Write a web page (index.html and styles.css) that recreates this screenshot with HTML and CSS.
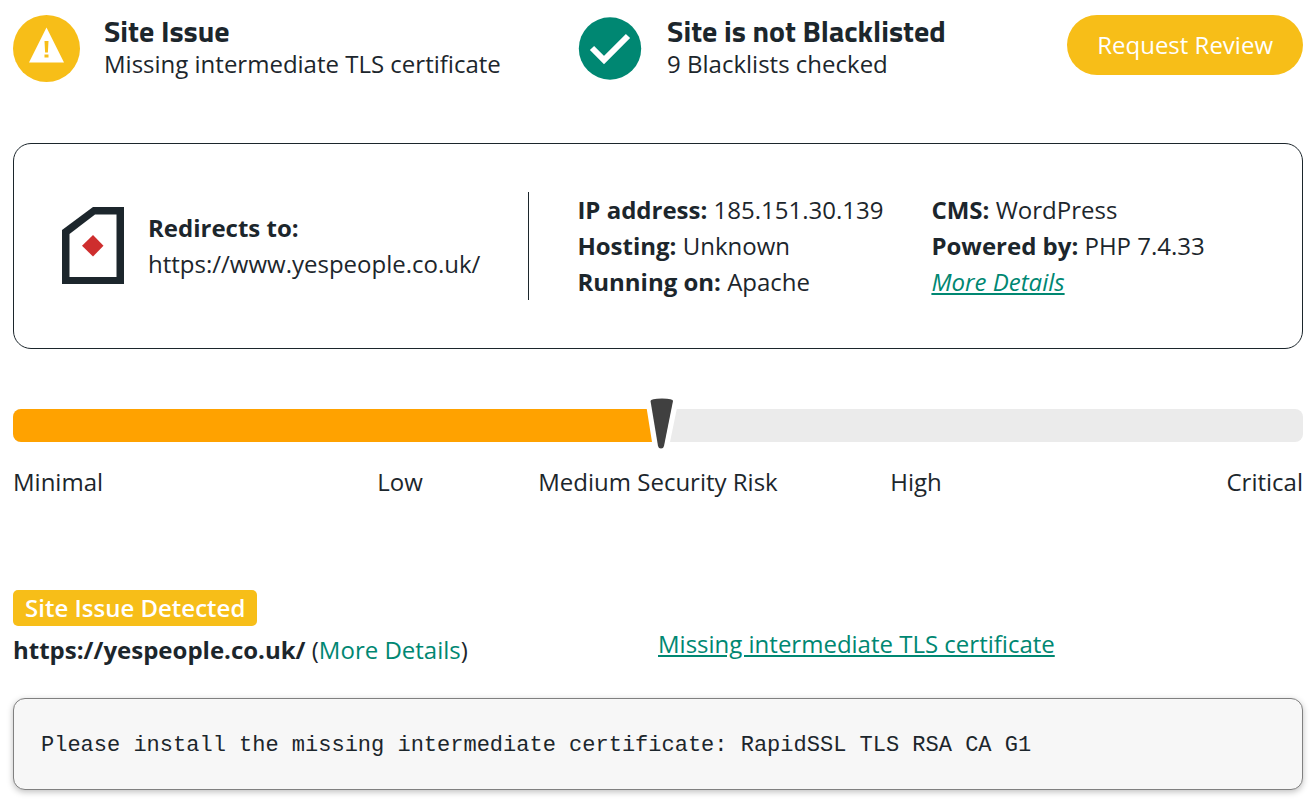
FILE: index.html
```
<!DOCTYPE html>
<html lang="en">
<head>
    <meta charset="UTF-8">
    <meta name="viewport" content="width=device-width, initial-scale=1.0">
    <title>Site check results</title>
    <link rel="stylesheet" href="styles.css">
</head>
<body>
    <header class="summary">
        <div class="status">
            <svg class="status-icon" viewBox="0 0 67 67" aria-hidden="true">
                <circle cx="33.5" cy="33.5" r="33.5" fill="#f7be18"/>
                <path d="M33.5 12.5L51 47.5H16z" fill="#fff"/>
                <path d="M31.5 26h4l-.6 11.5h-2.8zM31.5 39.5h4v3h-4z" fill="#f7be18"/>
            </svg>
            <div class="status-text">
                <h2>Site Issue</h2>
                <p>Missing intermediate TLS certificate</p>
            </div>
        </div>
        <div class="status">
            <svg class="status-icon" viewBox="0 0 67 67" aria-hidden="true">
                <circle cx="34" cy="33.5" r="31.2" fill="#008772"/>
                <path d="M16 33l12 12 24-24" fill="none" stroke="#fff" stroke-width="6"/>
            </svg>
            <div class="status-text">
                <h2>Site is not Blacklisted</h2>
                <p>9 Blacklists checked</p>
            </div>
        </div>
        <button type="button" class="review-btn">Request Review</button>
    </header>

    <section class="site-card">
        <div class="redirect">
            <svg class="page-icon" viewBox="0 0 62 78" aria-hidden="true">
                <path d="M0 23L31 0H62V77H0z" fill="#1c262c"/>
                <path d="M7.5 27L33 7.5H54.5V70H7.5z" fill="#fff"/>
                <path d="M31 28L41.5 38.8 31 49.5 20 38.8z" fill="#ce2e2e"/>
            </svg>
            <div>
                <strong>Redirects to:</strong><br>
                https://www.yespeople.co.uk/
            </div>
        </div>
        <div class="details">
            <strong>IP address:</strong> 185.151.30.139<br>
            <strong>Hosting:</strong> Unknown<br>
            <strong>Running on:</strong> Apache
        </div>
        <div class="details">
            <strong>CMS:</strong> WordPress<br>
            <strong>Powered by:</strong> PHP 7.4.33<br>
            <a href="#details" class="more"><em>More Details</em></a>
        </div>
    </section>

    <section class="risk">
        <div class="risk-bar">
            <div class="risk-fill"></div>
            <svg class="risk-pointer" viewBox="0 0 32 51" aria-hidden="true">
                <path d="M-1 0H33L24 44V48H6V44z" fill="#fff"/>
                <path d="M4.5 3Q4.5 .5 16 .5T27 3L18 48Q17.5 50.5 15 50.5T12 48z" fill="#404040"/>
            </svg>
        </div>
        <div class="risk-labels">
            <span>Minimal</span>
            <span>Low</span>
            <span>Medium Security Risk</span>
            <span>High</span>
            <span>Critical</span>
        </div>
    </section>

    <section class="issue" id="details">
        <div class="issue-row">
            <div>
                <span class="badge">Site Issue Detected</span>
                <p class="issue-url"><strong>https://yespeople.co.uk/</strong> (<a href="#details">More Details</a>)</p>
            </div>
            <a href="#certificate" class="issue-link">Missing intermediate TLS certificate</a>
        </div>
        <pre class="issue-note" id="certificate">Please install the missing intermediate certificate: RapidSSL TLS RSA CA G1</pre>
    </section>
</body>
</html>
```

FILE: styles.css
```
* {
    box-sizing: border-box;
}
body {
    margin: 0;
    padding: 15px 9px 14px 13px;
    background: #fff;
    color: #1c262c;
    font-family: "Open Sans", sans-serif;
    font-size: 24px;
    line-height: 36px;
}
h2, p {
    margin: 0;
}
a {
    color: #008772;
    text-decoration: none;
}
.summary {
    display: grid;
    grid-template-columns: 563fr 491fr auto;
    align-items: start;
}
.status {
    display: flex;
    gap: 24px;
}
.status-icon {
    width: 67px;
    height: 67px;
    flex-shrink: 0;
}
.status-text h2 {
    font-family: "Titillium Web", Roboto, sans-serif;
    font-size: 30px;
    font-weight: 700;
    line-height: 33px;
}
.status-text p {
    line-height: 32px;
}
.review-btn {
    height: 60px;
    padding: 0 30px;
    border: 0;
    border-radius: 30px;
    background: #f7be18;
    color: #fff;
    font: inherit;
    cursor: pointer;
}
.site-card {
    display: flex;
    margin-top: 61px;
    padding: 48px;
    border: 1px solid #1c262c;
    border-radius: 18px;
}
.redirect {
    display: flex;
    align-items: center;
    gap: 24px;
    padding-right: 48px;
    border-right: 1px solid #1c262c;
}
.page-icon {
    width: 62px;
    height: 78px;
    flex-shrink: 0;
}
.details {
    margin-left: 48px;
}
.more {
    text-decoration: underline;
}
.risk {
    margin-top: 60px;
}
.risk-bar {
    position: relative;
    height: 33px;
    border-radius: 8px;
    background: #ebebeb;
}
.risk-fill {
    width: 50%;
    height: 100%;
    border-radius: 8px 0 0 8px;
    background: #ffa200;
}
.risk-pointer {
    position: absolute;
    top: -11px;
    left: 50%;
    width: 32px;
    height: 51px;
    margin-left: -12px;
}
.risk-labels {
    display: grid;
    grid-template-columns: repeat(5, 1fr);
    margin-top: 22px;
    text-align: center;
    white-space: nowrap;
}
.risk-labels span:first-child {
    text-align: left;
}
.risk-labels span:last-child {
    text-align: right;
}
.issue {
    margin-top: 90px;
}
.issue-row {
    display: grid;
    grid-template-columns: 1fr 1fr;
    align-items: center;
}
.badge {
    display: block;
    width: fit-content;
    padding: 0 12px;
    border-radius: 5px;
    background: #f7be18;
    color: #fff;
    font-weight: 600;
}
.issue-url {
    margin-top: 6px;
}
.issue-link {
    justify-self: start;
    margin-top: 30px;
    text-decoration: underline;
}
.issue-note {
    margin: 30px 0 0;
    padding: 29px 27px 25px;
    border: 1px solid #808080;
    border-radius: 12px;
    background: #f7f7f7;
    box-shadow: 0 2px 6px rgba(0, 0, 0, 0.25);
    font-family: Consolas, "Liberation Mono", monospace;
    font-size: 22px;
    white-space: pre-wrap;
}
```
